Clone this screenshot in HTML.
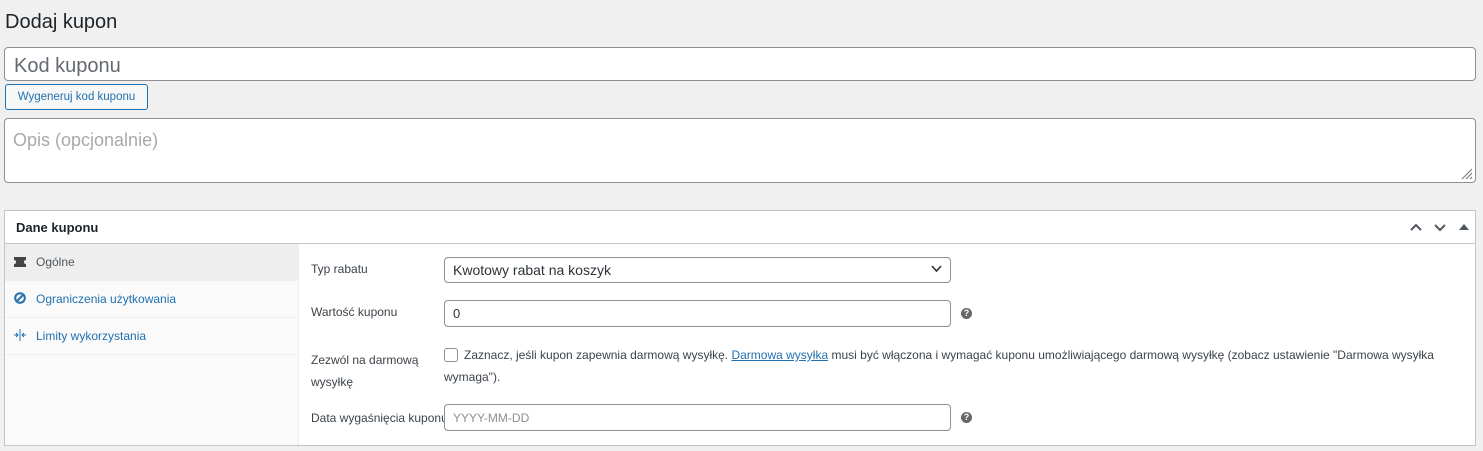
<!DOCTYPE html>
<html><head><meta charset="utf-8"><style>
*{box-sizing:border-box}
body{margin:0;background:#f0f0f1;font-family:"Liberation Sans",sans-serif;color:#3c434a;width:1483px;height:451px;overflow:hidden;position:relative}
.a{position:absolute}
h1{position:absolute;left:5px;top:11px;margin:0;font-size:20px;font-weight:400;color:#1d2327}
.inp{background:#fff;border:1px solid #8c8f94;border-radius:4px}
.lbl{font-size:12px;color:#3c434a;position:absolute;left:311px}
.fld{position:absolute;left:444px;width:507px;height:27px;background:#fff;border:1px solid #8c8f94;border-radius:4px;font-size:13px;color:#2c3338;padding:5px 8px}
.help{position:absolute;left:961px;width:11px;height:11px;border-radius:50%;background:#666;color:#fff;font-size:9px;font-weight:bold;text-align:center;line-height:11px}
.tab{position:absolute;left:5px;width:293px;height:37px;border-bottom:1px solid #eee;font-size:12px;color:#2271b1;padding-left:31px;line-height:36px}
</style></head><body>
<h1>Dodaj kupon</h1>
<div class="a inp" style="left:4px;top:47px;width:1472px;height:34px;font-size:20px;color:#646970;padding:7px 9px 0">Kod kuponu</div>
<div class="a" style="left:5px;top:84px;width:143px;height:26px;border:1px solid #2271b1;border-radius:3px;background:#f6f7f7;color:#2271b1;font-size:11.5px;text-align:center;line-height:24px">Wygeneruj kod kuponu</div>
<div class="a inp" style="left:4px;top:118px;width:1472px;height:65px;font-size:18px;color:#a7aaad;padding:11px 8px 0">Opis (opcjonalnie)</div>
<svg class="a" style="left:1461px;top:168px" width="12" height="12"><path d="M11 1L1 11M11 5L5 11M11 9L9 11" stroke="#777" stroke-width="1"/></svg>
<div class="a" style="left:4px;top:210px;width:1472px;height:236px;background:#fff;border:1px solid #c3c4c7"></div>
<div class="a" style="left:5px;top:243px;width:1470px;height:1px;background:#c3c4c7"></div>
<div class="a" style="left:16px;top:220px;font-size:13px;font-weight:bold;color:#1d2327">Dane kuponu</div>
<svg class="a" style="left:1409px;top:220px" width="64" height="14"><path d="M2 10L7 5L12 10" stroke="#50575e" stroke-width="2" fill="none"/><path d="M26 5L31 10L36 5" stroke="#50575e" stroke-width="2" fill="none"/><path d="M50 10L55 4L60 10Z" fill="#50575e"/></svg>
<div class="a" style="left:5px;top:244px;width:294px;height:201px;background:#fafafa;border-right:1px solid #eee"></div>
<div class="tab" style="top:244px;background:#eee;color:#50575e">Ogólne</div>
<svg class="a" style="left:14px;top:257px" width="12" height="10"><path d="M0 0H12V3A2 2 0 0 0 12 7V10H0V7A2 2 0 0 0 0 3Z" fill="#444"/></svg>
<div class="tab" style="top:281px">Ograniczenia użytkowania</div>
<svg class="a" style="left:14px;top:292px" width="12" height="12"><circle cx="6" cy="6" r="4.8" stroke="#2271b1" stroke-width="2" fill="none"/><path d="M3 9L9 3" stroke="#2271b1" stroke-width="2"/></svg>
<div class="tab" style="top:318px">Limity wykorzystania</div>
<svg class="a" style="left:14px;top:329px" width="12" height="12"><path d="M6 0V12M0 6H4M8 6H12M2 4L4 6L2 8M10 4L8 6L10 8" stroke="#2271b1" stroke-width="1" fill="none"/></svg>
<div class="lbl" style="top:262px">Typ rabatu</div>
<div class="fld" style="top:257px;height:26px;padding:4px 8px;font-size:14px">Kwotowy rabat na koszyk</div>
<svg class="a" style="left:931px;top:265px" width="11" height="8"><path d="M1 1L5.5 6L10 1" stroke="#2c3338" stroke-width="1.6" fill="none"/></svg>
<div class="lbl" style="top:305px">Wartość kuponu</div>
<div class="fld" style="top:300px">0</div>
<div class="help" style="top:308px">?</div>
<div class="lbl" style="top:349px;line-height:22px">Zezwól na darmową<br>wysyłkę</div>
<div class="a" style="left:444px;top:348px;width:14px;height:14px;border:1px solid #8c8f94;border-radius:3px;background:#fff"></div>
<div class="a" style="left:464px;top:346px;width:1000px;font-size:12px;line-height:19px;color:#3c434a">Zaznacz, jeśli kupon zapewnia darmową wysyłkę. <span style="color:#2271b1;text-decoration:underline">Darmowa wysyłka</span> musi być włączona i wymagać kuponu umożliwiającego darmową wysyłkę (zobacz ustawienie "Darmowa wysyłka</div>
<div class="a" style="left:444px;top:368px;font-size:12px;line-height:19px">wymaga").</div>
<div class="lbl" style="top:411px">Data wygaśnięcia kuponu</div>
<div class="fld" style="top:404px;color:#8c8f94;font-size:12px;padding-top:6px">YYYY-MM-DD</div>
<div class="help" style="top:412px">?</div>
</body></html>
